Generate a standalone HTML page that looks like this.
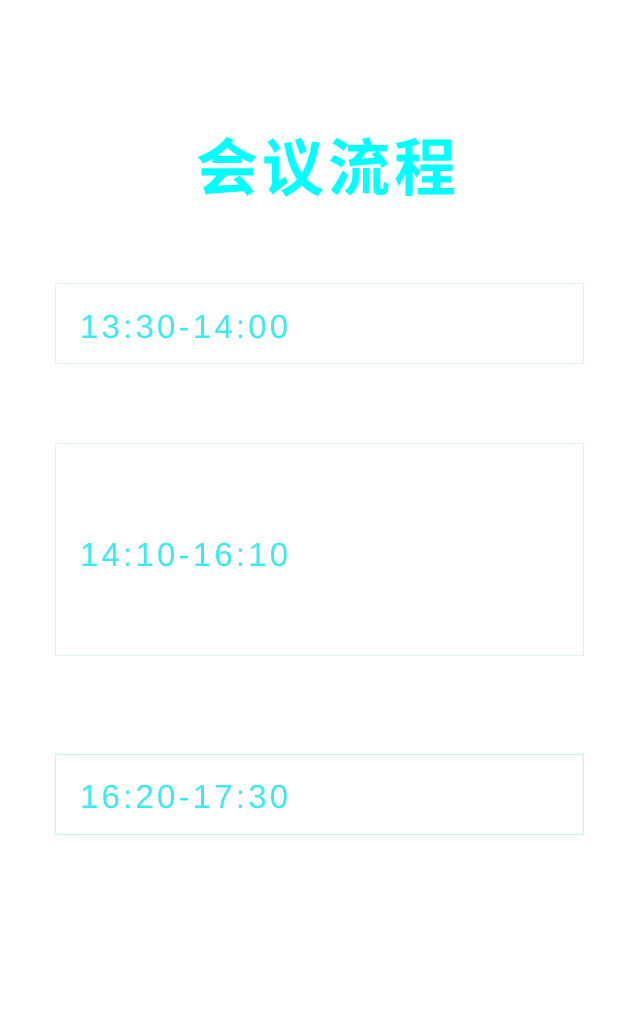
<!DOCTYPE html>
<html><head><meta charset="utf-8"><style>
html,body{margin:0;padding:0;background:#fff;}
body{width:640px;height:1030px;position:relative;overflow:hidden;font-family:"Liberation Sans","Noto Sans CJK SC",sans-serif;}
.title{position:absolute;left:196px;top:130px;font-size:62px;line-height:80px;color:#00ffff;letter-spacing:4px;font-weight:bold;white-space:nowrap;}
.box{position:absolute;left:55px;width:527px;border:1px solid #d8f4f4;box-sizing:content-box;}
.t{position:absolute;left:24px;font-size:33px;color:#3ce8f2;letter-spacing:3.2px;line-height:40px;}
</style></head><body>
<div class="title">会议流程</div>
<div class="box" style="top:283px;height:79px"><div class="t" style="top:23px">13:30-14:00</div></div>
<div class="box" style="top:443px;height:211px"><div class="t" style="top:91px">14:10-16:10</div></div>
<div class="box" style="top:754px;height:79px;border-color:#b8f8f8"><div class="t" style="top:22px">16:20-17:30</div></div>
</body></html>
